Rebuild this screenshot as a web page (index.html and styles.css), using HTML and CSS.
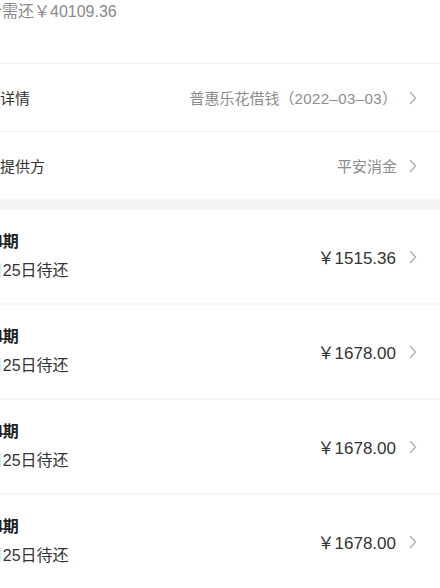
FILE: index.html
```html
<!DOCTYPE html>
<html lang="zh-CN">
<head>
<meta charset="utf-8">
<title>账单详情</title>
<link rel="stylesheet" href="styles.css">
</head>
<body>
<div class="page">
  <div class="summary">合计需还￥40109.36</div>

  <div class="info">
    <div class="info-row">
      <span class="label">借款详情</span>
      <span class="value">普惠乐花借钱（<span class="date">2022–03–03</span>）</span>
      <svg class="chev" viewBox="0 0 8 14" width="8" height="14"><path d="M1.5 1.5 L6.5 7 L1.5 12.5" fill="none" stroke="#b4b4b4" stroke-width="1.5" stroke-linecap="round" stroke-linejoin="round"/></svg>
    </div>
    <div class="info-row">
      <span class="label">资金提供方</span>
      <span class="value">平安消金</span>
      <svg class="chev" viewBox="0 0 8 14" width="8" height="14"><path d="M1.5 1.5 L6.5 7 L1.5 12.5" fill="none" stroke="#b4b4b4" stroke-width="1.5" stroke-linecap="round" stroke-linejoin="round"/></svg>
    </div>
  </div>

  <div class="band"></div>

  <div class="list">
    <div class="bill">
      <div class="bill-text">
        <div class="bill-title">第04期</div>
        <div class="bill-sub">04月25日待还</div>
      </div>
      <span class="amount">￥1515.36</span>
      <svg class="chev" viewBox="0 0 8 14" width="8" height="14"><path d="M1.5 1.5 L6.5 7 L1.5 12.5" fill="none" stroke="#b4b4b4" stroke-width="1.5" stroke-linecap="round" stroke-linejoin="round"/></svg>
    </div>
    <div class="bill">
      <div class="bill-text">
        <div class="bill-title">第04期</div>
        <div class="bill-sub">05月25日待还</div>
      </div>
      <span class="amount">￥1678.00</span>
      <svg class="chev" viewBox="0 0 8 14" width="8" height="14"><path d="M1.5 1.5 L6.5 7 L1.5 12.5" fill="none" stroke="#b4b4b4" stroke-width="1.5" stroke-linecap="round" stroke-linejoin="round"/></svg>
    </div>
    <div class="bill">
      <div class="bill-text">
        <div class="bill-title">第04期</div>
        <div class="bill-sub">06月25日待还</div>
      </div>
      <span class="amount">￥1678.00</span>
      <svg class="chev" viewBox="0 0 8 14" width="8" height="14"><path d="M1.5 1.5 L6.5 7 L1.5 12.5" fill="none" stroke="#b4b4b4" stroke-width="1.5" stroke-linecap="round" stroke-linejoin="round"/></svg>
    </div>
    <div class="bill">
      <div class="bill-text">
        <div class="bill-title">第04期</div>
        <div class="bill-sub">07月25日待还</div>
      </div>
      <span class="amount">￥1678.00</span>
      <svg class="chev" viewBox="0 0 8 14" width="8" height="14"><path d="M1.5 1.5 L6.5 7 L1.5 12.5" fill="none" stroke="#b4b4b4" stroke-width="1.5" stroke-linecap="round" stroke-linejoin="round"/></svg>
    </div>
  </div>
</div>
</body>
</html>
```

FILE: styles.css
```css
html, body {
  margin: 0;
  padding: 0;
  background: #ffffff;
  overflow: hidden;
}

body {
  width: 440px;
  height: 588px;
  font-family: "Liberation Sans", "Noto Sans CJK SC", sans-serif;
  color: #333333;
}

.page {
  margin-left: -47px;
  width: 487px;
}

.summary {
  height: 64px;
  box-sizing: border-box;
  padding-left: 17px;
  font-size: 16px;
  line-height: 23px;
  color: #8a8a8a;
  border-bottom: 1px solid #f0f0f0;
}

.info-row {
  display: flex;
  align-items: center;
  height: 67px;
  padding: 0 23px 0 17px;
  border-bottom: 1px solid #f2f2f2;
}

.info-row:last-child {
  border-bottom: none;
}

.label {
  flex: 1;
  font-size: 15px;
  color: #333333;
}

.value {
  font-size: 15px;
  color: #8c8c8c;
  margin-right: 12px;
}

.date {
  letter-spacing: 0.4px;
}

.chev {
  display: block;
  flex: none;
}

.band {
  height: 11px;
  background: #f5f5f5;
}

.bill {
  display: flex;
  align-items: center;
  height: 93px;
  padding: 0 23px 0 16px;
  border-bottom: 2px solid #f6f6f6;
}

.bill-text {
  flex: 1;
  display: flex;
  flex-direction: column;
  gap: 7px;
}

.bill-title {
  font-size: 16px;
  line-height: 22px;
  font-weight: bold;
  color: #222222;
}

.bill-sub {
  font-size: 16px;
  line-height: 22px;
  color: #333333;
}

.amount {
  font-size: 17px;
  color: #333333;
  margin-right: 13px;
}
```
